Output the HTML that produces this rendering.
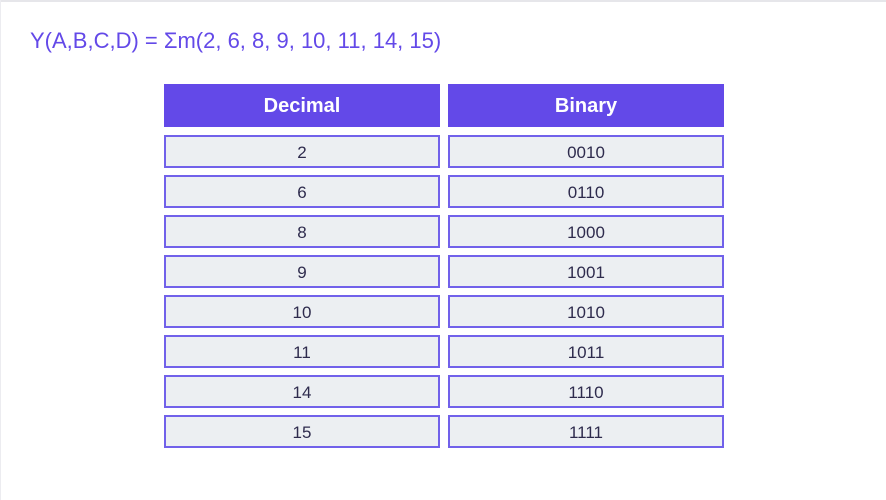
<!DOCTYPE html>
<html><head><meta charset="utf-8"><style>
html,body{margin:0;padding:0;}
body{width:886px;height:500px;background:#fff;position:relative;overflow:hidden;font-family:"Liberation Sans",sans-serif;}
.top{position:absolute;left:0;top:0;width:886px;height:2px;background:#e6e6ea;}
.left{position:absolute;left:0;top:0;width:1px;height:500px;background:#ececf0;}
.title{position:absolute;left:30px;top:28px;font-size:22px;color:#6349e8;letter-spacing:0px;white-space:nowrap;}
.c{position:absolute;width:276px;box-sizing:border-box;text-align:center;}
.h{top:84px;height:43px;background:#6349e8;color:#fff;font-weight:bold;font-size:20px;line-height:45px;}
.r{height:33px;background:#eceff2;border:2px solid #7161ea;color:#2e2b4d;font-size:17px;line-height:31px;}
</style></head><body>
<div class="top"></div><div class="left"></div>
<div class="title">Y(A,B,C,D) = Σm(2, 6, 8, 9, 10, 11, 14, 15)</div>
<div class="c h" style="left:164px">Decimal</div>
<div class="c h" style="left:448px">Binary</div>
<div class="c r" style="left:164px;top:135px">2</div><div class="c r" style="left:448px;top:135px">0010</div>
<div class="c r" style="left:164px;top:175px">6</div><div class="c r" style="left:448px;top:175px">0110</div>
<div class="c r" style="left:164px;top:215px">8</div><div class="c r" style="left:448px;top:215px">1000</div>
<div class="c r" style="left:164px;top:255px">9</div><div class="c r" style="left:448px;top:255px">1001</div>
<div class="c r" style="left:164px;top:295px">10</div><div class="c r" style="left:448px;top:295px">1010</div>
<div class="c r" style="left:164px;top:335px">11</div><div class="c r" style="left:448px;top:335px">1011</div>
<div class="c r" style="left:164px;top:375px">14</div><div class="c r" style="left:448px;top:375px">1110</div>
<div class="c r" style="left:164px;top:415px">15</div><div class="c r" style="left:448px;top:415px">1111</div>
</body></html>
